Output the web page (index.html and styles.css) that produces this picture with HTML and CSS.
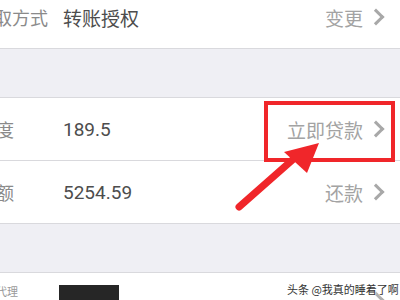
FILE: index.html
```html
<!DOCTYPE html>
<html lang="zh">
<head>
<meta charset="utf-8">
<link rel="stylesheet" href="styles.css">
</head>
<body>
<div class="page">
  <div class="row row-first">
    <div class="label"><span class="label-text shift-a">获取方式</span></div>
    <div class="value">转账授权</div>
    <div class="action">变更<span class="chev"></span></div>
  </div>
  <div class="band"></div>
  <div class="row">
    <div class="label"><span class="label-text shift-b">额度</span></div>
    <div class="value">189.5</div>
    <div class="action">立即贷款<span class="chev"></span></div>
  </div>
  <div class="row">
    <div class="label"><span class="label-text shift-b">余额</span></div>
    <div class="value">5254.59</div>
    <div class="action">还款<span class="chev"></span></div>
  </div>
  <div class="band"></div>
  <div class="row row-last">
    <div class="label small"><span class="label-text shift-c">代理</span></div>
    <div class="black-box"></div>
    <div class="action"><span class="chev"></span></div>
  </div>

  <div class="highlight"></div>
  <svg class="arrow" width="400" height="300" viewBox="0 0 400 300">
    <line x1="239" y1="207" x2="298" y2="155" stroke="#f0262a" stroke-width="7" stroke-linecap="round"/>
    <polygon points="319,143 284,152 307,173" fill="#f0262a"/>
  </svg>
  <div class="watermark">头条 @我真的睡着了啊</div>
</div>
</body>
</html>
```
FILE: styles.css
```css
html, body {
  margin: 0;
  padding: 0;
  background: #ffffff;
}
body {
  width: 400px;
  height: 300px;
  overflow: hidden;
  font-family: Roboto, "Noto Sans CJK SC", sans-serif;
}
.page {
  position: relative;
  width: 400px;
  height: 300px;
  overflow: hidden;
}
.row {
  display: flex;
  align-items: center;
  height: 62px;
  background: #ffffff;
  border-bottom: 1px solid #d9d9dd;
}
.row-first {
  margin-top: -14px;
}
.row-last {
  border-bottom: none;
  align-items: flex-end;
  height: 27px;
}
.band {
  height: 48px;
  background: #efeff4;
  border-bottom: 1px solid #d9d9dd;
}
.label {
  width: 63px;
  flex: none;
  overflow: hidden;
  white-space: nowrap;
  font-size: 18px;
  color: #8a8a8a;
}
.label-text {
  display: inline-block;
}
.shift-a { margin-left: -24px; }
.shift-b { margin-left: -22px; }
.shift-c { margin-left: -4px; }
.label.small {
  font-size: 11px;
  color: #9a9a9a;
  width: 59px;
  line-height: 14px;
}
.value {
  font-size: 19px;
  color: #4d4d4d;
}
.action {
  margin-left: auto;
  padding-right: 16px;
  display: flex;
  align-items: center;
  font-size: 19px;
  color: #a3a3a3;
}
.chev {
  display: inline-block;
  width: 9px;
  height: 9px;
  border-top: 3px solid #a8a8a8;
  border-right: 3px solid #a8a8a8;
  transform: rotate(45deg);
  margin-left: 7px;
  margin-right: 2px;
}
.row-last .chev {
  margin-bottom: -6px;
  border-color: #b0b0b0;
}
.black-box {
  width: 60px;
  height: 15px;
  background: #262626;
}
.highlight {
  position: absolute;
  left: 264px;
  top: 101px;
  width: 123px;
  height: 53px;
  border: 4px solid #f0262a;
}
.arrow {
  position: absolute;
  left: 0;
  top: 0;
}
.watermark {
  position: absolute;
  left: 287px;
  top: 282px;
  font-family: "Noto Sans CJK SC", sans-serif;
  font-size: 11px;
  line-height: 15px;
  color: #333333;
  text-shadow: 0 0 2px #ffffff, 0 0 2px #ffffff, 0 0 1px #ffffff;
  white-space: nowrap;
}
```
